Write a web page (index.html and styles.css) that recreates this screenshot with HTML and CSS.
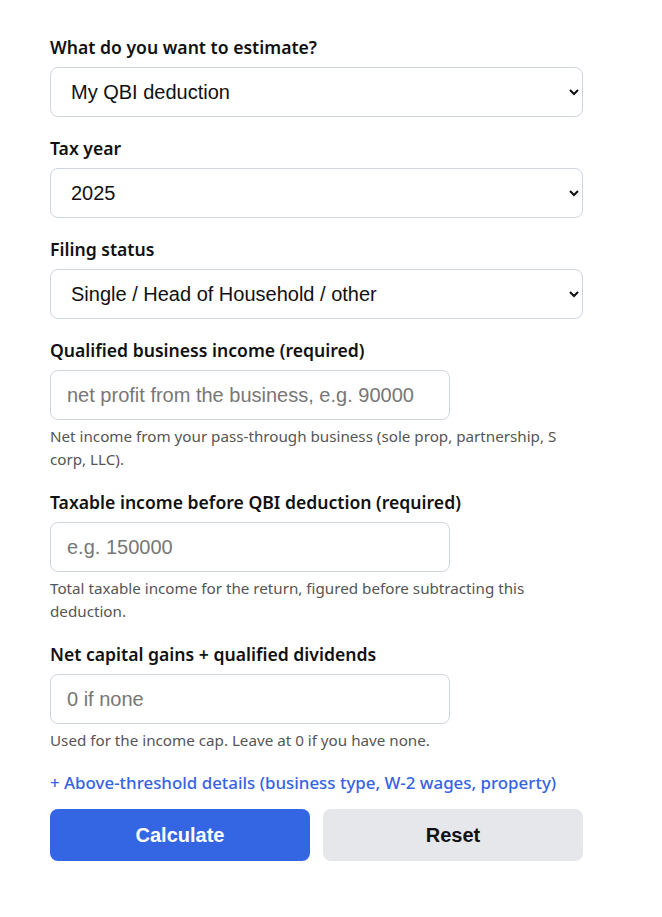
FILE: index.html
```html
<!DOCTYPE html>
<html lang="en">
<head>
    <meta charset="UTF-8">
    <meta name="viewport" content="width=device-width, initial-scale=1.0">
    <title>QBI Deduction Estimator</title>
    <link rel="stylesheet" href="styles.css">
</head>
<body>
    <form class="estimator" id="qbi-form">
        <div class="field">
            <label for="estimate-type">What do you want to estimate?</label>
            <select id="estimate-type" class="wide">
                <option>My QBI deduction</option>
            </select>
        </div>

        <div class="field">
            <label for="tax-year">Tax year</label>
            <select id="tax-year" class="wide">
                <option>2025</option>
            </select>
        </div>

        <div class="field">
            <label for="filing-status">Filing status</label>
            <select id="filing-status" class="wide">
                <option>Single / Head of Household / other</option>
            </select>
        </div>

        <div class="field">
            <label for="qbi">Qualified business income (required)</label>
            <input type="text" id="qbi" placeholder="net profit from the business, e.g. 90000">
            <p class="hint">Net income from your pass-through business (sole prop, partnership, S corp, LLC).</p>
        </div>

        <div class="field">
            <label for="taxable-income">Taxable income before QBI deduction (required)</label>
            <input type="text" id="taxable-income" placeholder="e.g. 150000">
            <p class="hint">Total taxable income for the return, figured before subtracting this deduction.</p>
        </div>

        <div class="field">
            <label for="cap-gains">Net capital gains + qualified dividends</label>
            <input type="text" id="cap-gains" placeholder="0 if none">
            <p class="hint">Used for the income cap. Leave at 0 if you have none.</p>
        </div>

        <a href="#" class="toggle-details">+ Above-threshold details (business type, W-2 wages, property)</a>

        <div class="actions">
            <button type="button" class="btn btn-primary">Calculate</button>
            <button type="reset" class="btn btn-secondary">Reset</button>
        </div>
    </form>
</body>
</html>
```

FILE: styles.css
```css
body {
    margin: 0;
    padding: 0;
    background: #fff;
    font-family: "Noto Sans", "Open Sans", sans-serif;
    color: #111;
}

.estimator {
    width: 533px;
    padding: 35px 0 40px 50px;
}

.field {
    margin-bottom: 19px;
}

label {
    display: block;
    font-size: 17.6px;
    font-weight: 600;
    line-height: 24px;
    margin-bottom: 8px;
    color: #111;
}

select,
input[type="text"] {
    box-sizing: border-box;
    height: 50px;
    padding: 0 16px;
    font-family: "Liberation Sans", Arial, sans-serif;
    font-size: 20px;
    color: #111;
    background: #fff;
    border: 1px solid #cfd5df;
    border-radius: 8px;
}

select.wide {
    width: 533px;
}

input[type="text"] {
    width: 400px;
}

input::placeholder {
    color: #777;
}

.hint {
    margin: 5px 0 0;
    font-size: 15.2px;
    line-height: 23px;
    color: #555;
}

.toggle-details {
    display: block;
    font-size: 16.9px;
    font-weight: 500;
    line-height: 24px;
    color: #3563e3;
    text-decoration: none;
}

.actions {
    display: grid;
    grid-template-columns: 1fr 1fr;
    gap: 13px;
    margin-top: 14px;
}

.btn {
    height: 52px;
    border: none;
    border-radius: 8px;
    font-family: "Liberation Sans", Arial, sans-serif;
    font-size: 20px;
    font-weight: bold;
    cursor: pointer;
}

.btn-primary {
    background-color: #3465e3;
    color: #fff;
}

.btn-secondary {
    background-color: #e5e7eb;
    color: #111;
}
```
